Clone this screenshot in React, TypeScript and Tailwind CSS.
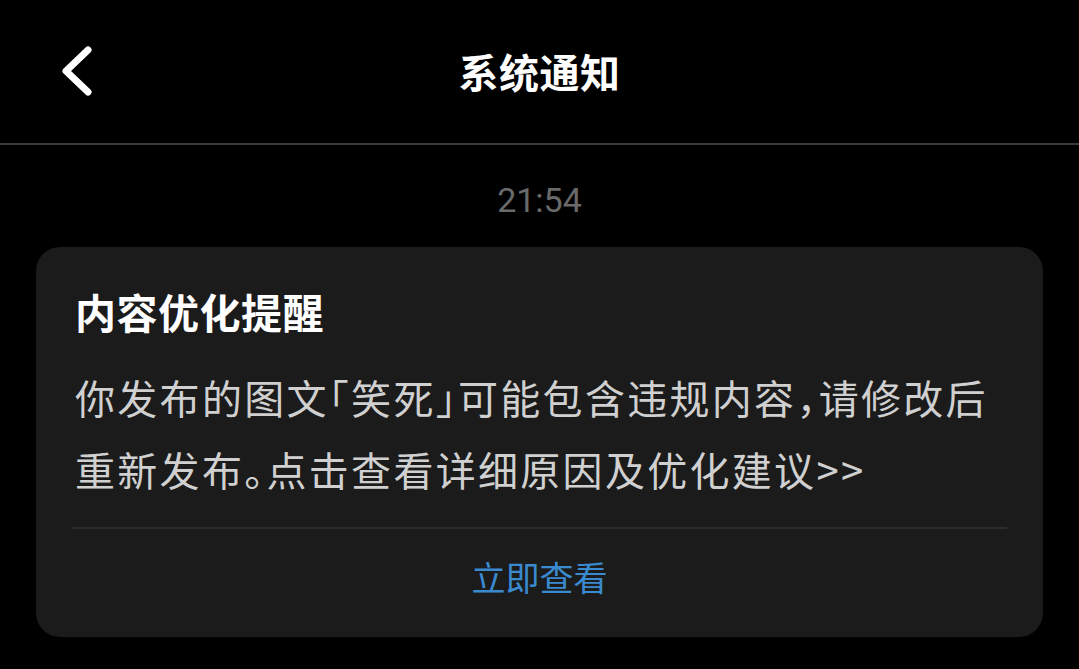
const cjk = "font-['Noto_Sans_CJK_SC','Noto_Sans',sans-serif]"

function Header() {
  return (
    <header className="relative flex h-[145px] items-center justify-center border-b-2 border-[#3a3a3a] pb-[2px]">
      <button type="button" aria-label="返回" className="absolute left-[56px] top-[40px] flex h-[60px] w-[44px] items-center justify-center text-white">
        <svg viewBox="0 0 44 60" className="h-[60px] w-[44px]" fill="none">
          <path d="M32 10 L10 31 L32 52" stroke="currentColor" strokeWidth="7" strokeLinecap="round" strokeLinejoin="round" />
        </svg>
      </button>
      <h1 className={`${cjk} text-[40px] font-bold leading-[48px] tracking-[0.5px] text-white`}>系统通知</h1>
    </header>
  )
}

function NoticeCard() {
  return (
    <div className="mx-[36px] rounded-[24px] bg-[#1b1b1b] px-[36px] pb-[38px] pt-[40px]">
      <h2 className={`${cjk} px-[3px] text-[41px] font-bold leading-[48px] tracking-[0.5px] text-white`}>内容优化提醒</h2>
      <p className={`${cjk} mt-[26px] px-[3px] text-[40px] leading-[72px] tracking-[2.3px] text-[#d0d0d0] [font-feature-settings:'halt']`}>
        你发布的图文「笑死」可能包含违规内容，请修改后重新发布。点击查看详细原因及优化建议&gt;&gt;
      </p>
      <div className="mt-[22px] h-[2px] bg-[#2c2c2c]" />
      <div className="mt-[26px] flex justify-center">
        <button type="button" className={`${cjk} text-[34px] leading-[44px] text-[#3a8ad0]`}>立即查看</button>
      </div>
    </div>
  )
}

export default function App() {
  return (
    <div className="h-screen w-full overflow-hidden bg-black">
      <Header />
      <div className="pb-[27px] pt-[35px] text-center font-['Roboto','Liberation_Sans',sans-serif] text-[34px] leading-[40px] text-[#6a6a6a]">
        21:54
      </div>
      <NoticeCard />
    </div>
  )
}
